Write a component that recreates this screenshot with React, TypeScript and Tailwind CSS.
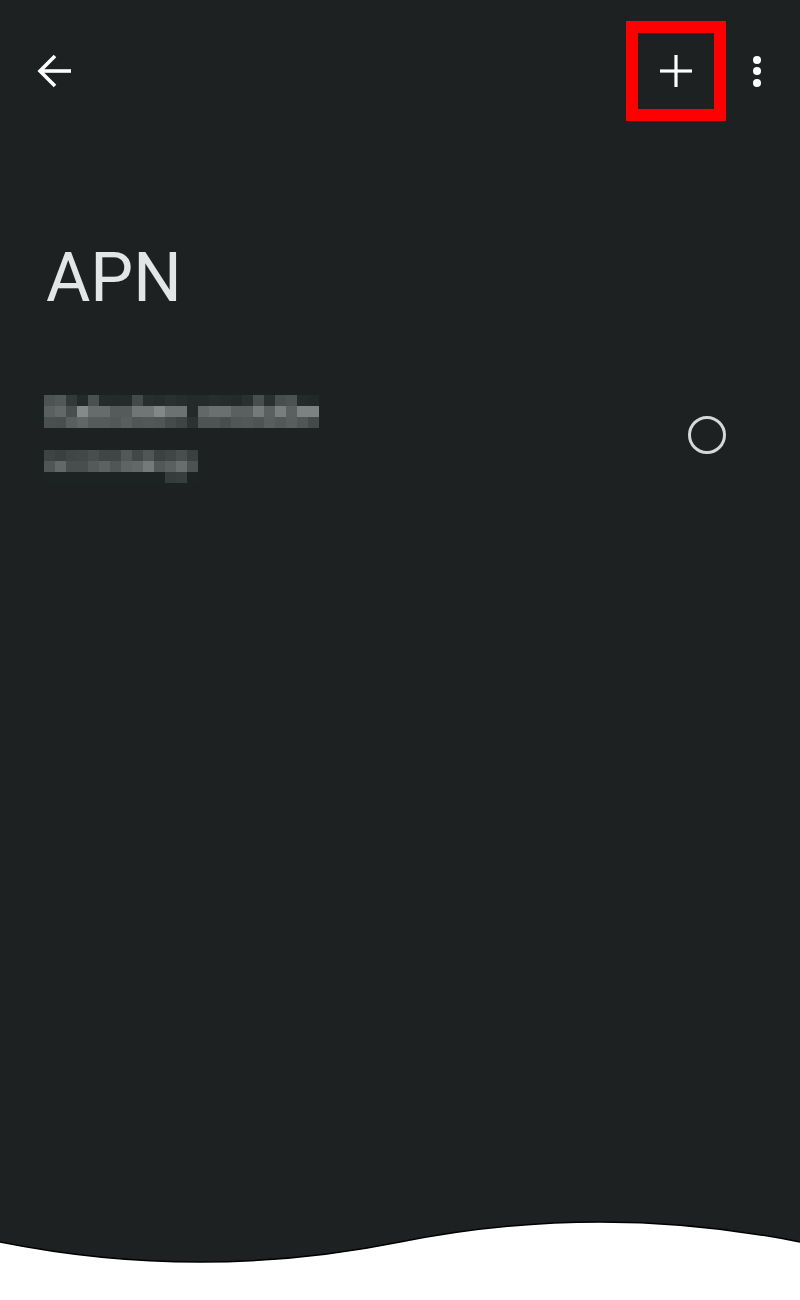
import React from "react";

const line1: number[][] = [
  [0x4d, 0x52, 0x33, 0x24, 0x4a, 0x25, 0x24, 0x25, 0x44, 0x28, 0x26, 0x2a, 0x27, 0x24, 0x25, 0x28, 0x26, 0x24, 0x2a, 0x48, 0x2a, 0x48, 0x4c, 0x24, 0x22],
  [0x5a, 0x62, 0x48, 0x84, 0x66, 0x66, 0x55, 0x55, 0x70, 0x70, 0x82, 0x6c, 0x6c, 0x24, 0x62, 0x6a, 0x6a, 0x5a, 0x5a, 0x74, 0x5a, 0x78, 0x5a, 0x7c, 0x7c],
  [0x4a, 0x48, 0x58, 0x60, 0x55, 0x55, 0x52, 0x58, 0x50, 0x52, 0x50, 0x45, 0x3e, 0x2c, 0x4e, 0x4e, 0x48, 0x50, 0x52, 0x4e, 0x58, 0x52, 0x58, 0x50, 0x44],
];

const line2: number[][] = [
  [0x3e, 0x3a, 0x40, 0x42, 0x48, 0x40, 0x40, 0x52, 0x42, 0x50, 0x3c, 0x40, 0x48, 0x3a],
  [0x50, 0x62, 0x48, 0x48, 0x54, 0x5c, 0x50, 0x5e, 0x62, 0x74, 0x52, 0x5a, 0x68, 0x4c],
  [0x1d, 0x1d, 0x1d, 0x1d, 0x1d, 0x1d, 0x1d, 0x1d, 0x1d, 0x1d, 0x1d, 0x36, 0x38, 0x1d],
];

function col(v: number) {
  const g = Math.min(255, v + 6);
  return `rgb(${v},${g},${g})`;
}

function Pixels({ rows }: { rows: number[][] }) {
  return (
    <div className="flex flex-col">
      {rows.map((r, i) => (
        <div key={i} className="flex">
          {r.map((v, j) => (
            <div key={j} className="w-[11px] h-[11px]" style={{ backgroundColor: col(v) }} />
          ))}
        </div>
      ))}
    </div>
  );
}

export default function App() {
  return (
    <div className="w-[800px] h-[1300px] bg-white flex flex-col" style={{ fontFamily: "Roboto, 'Noto Sans', sans-serif" }}>
      <div className="flex-1 bg-[#1d2122] flex flex-col">
        {/* Header */}
        <div className="flex items-center pt-[21px] h-[121px] pl-[37px] pr-[39px]">
          <svg width="36" height="36" viewBox="0 0 36 36" fill="none" stroke="#ffffff" strokeWidth="3.6" strokeLinecap="butt">
            <line x1="3" y1="18" x2="34" y2="18" />
            <polyline points="18,3 3,18 18,33" strokeLinejoin="miter" />
          </svg>
          <div className="flex-1" />
          <div className="w-[100px] h-[100px] border-[12px] border-[#ff0000] flex items-center justify-center">
            <svg width="34" height="34" viewBox="0 0 34 34" stroke="#ffffff" strokeWidth="3.2">
              <line x1="1" y1="17" x2="33" y2="17" />
              <line x1="17" y1="1" x2="17" y2="33" />
            </svg>
          </div>
          <div className="ml-[27px] flex flex-col gap-[3.5px]">
            <div className="w-[8px] h-[8px] rounded-full bg-white" />
            <div className="w-[8px] h-[8px] rounded-full bg-white" />
            <div className="w-[8px] h-[8px] rounded-full bg-white" />
          </div>
        </div>

        {/* Title */}
        <h1 className="mt-[123px] pl-[46px] text-[68px] leading-[68px] text-[#e2e6e6] font-normal">APN</h1>

        {/* List item */}
        <div className="mt-[83px] flex pl-[44px] pr-[74px]">
          <div className="flex flex-col gap-[22px]">
            <Pixels rows={line1} />
            <Pixels rows={line2} />
          </div>
          <div className="flex-1" />
          <div className="mt-[21px] w-[38px] h-[38px] rounded-full border-[3px] border-[#d4d8d8]" />
        </div>
      </div>
      <svg className="block" width="800" height="100" viewBox="0 0 800 100">
        <path d="M0,0 H800 V42 C667,15.3 533,15.3 400,42 C267,68.7 133,68.7 0,42 Z" fill="#1d2122" />
        <path d="M0,42 C133,68.7 267,68.7 400,42 C533,15.3 667,15.3 800,42" fill="none" stroke="#000000" strokeWidth="1.5" />
      </svg>
    </div>
  );
}
